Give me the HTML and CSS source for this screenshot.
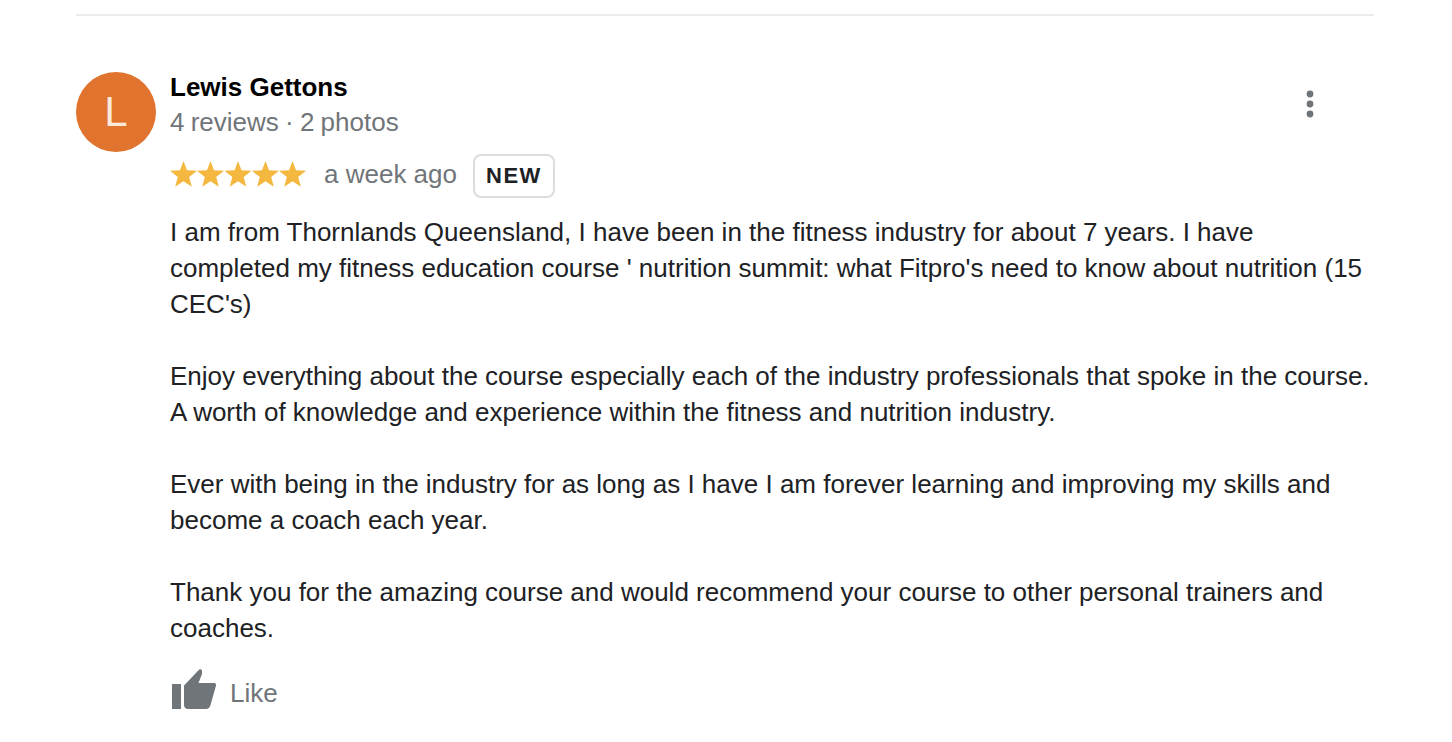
FILE: index.html
```html
<!DOCTYPE html>
<html lang="en">
<head>
<meta charset="utf-8">
<title>Review</title>
<link rel="stylesheet" href="styles.css">
</head>
<body>
<main class="page">
  <article class="review">
    <div class="avatar">L</div>
    <div class="content">
      <div class="head">
        <div>
          <div class="name">Lewis Gettons</div>
          <div class="meta">4 reviews · 2 photos</div>
        </div>
        <svg class="more" viewBox="0 0 10 30" width="10" height="30" aria-label="More"><circle cx="5" cy="5" r="3.4"/><circle cx="5" cy="15" r="3.4"/><circle cx="5" cy="25" r="3.4"/></svg>
      </div>
      <div class="rating">
        <svg class="stars" viewBox="0 0 136 26" width="136" height="26" aria-label="5 stars">
          <path d="M13.500 0l3.500 9.300 10 .5-7.800 6.200 2.600 9.700-8.300-5.500-8.300 5.500 2.600-9.700L0 9.800l10-.5z"/>
          <path transform="translate(27 0)" d="M13.500 0l3.500 9.300 10 .5-7.800 6.200 2.600 9.700-8.300-5.500-8.300 5.500 2.600-9.700L0 9.800l10-.5z"/>
          <path transform="translate(54.500 0)" d="M13.500 0l3.500 9.300 10 .5-7.800 6.200 2.600 9.700-8.300-5.500-8.300 5.500 2.600-9.700L0 9.800l10-.5z"/>
          <path transform="translate(82 0)" d="M13.500 0l3.500 9.300 10 .5-7.800 6.200 2.600 9.700-8.300-5.500-8.300 5.500 2.600-9.700L0 9.800l10-.5z"/>
          <path transform="translate(109 0)" d="M13.500 0l3.500 9.300 10 .5-7.800 6.200 2.600 9.700-8.300-5.500-8.300 5.500 2.600-9.700L0 9.800l10-.5z"/>
        </svg>
        <span class="time">a week ago</span>
        <span class="badge">NEW</span>
      </div>
      <div class="body">
        <p>I am from Thornlands Queensland, I have been in the fitness industry for about 7 years. I have<br>completed my fitness education course ' nutrition summit: what Fitpro's need to know about nutrition (15<br>CEC's)</p>
        <p>Enjoy everything about the course especially each of the industry professionals that spoke in the course.<br>A worth of knowledge and experience within the fitness and nutrition industry.</p>
        <p>Ever with being in the industry for as long as I have I am forever learning and improving my skills and<br>become a coach each year.</p>
        <p>Thank you for the amazing course and would recommend your course to other personal trainers and<br>coaches.</p>
      </div>
      <div class="like">
        <svg viewBox="0 0 46 42" width="46" height="42" aria-hidden="true"><path d="M2 16h9v25H2z"/><path d="M14 17.500L29 1.800c1-1 3-.4 3 1.200v3L28.500 15H44c1.500 0 2.300 1.100 2 2.500L40.500 37c-.7 2.500-2.200 4-4.500 4H18c-2.500 0-4-1.700-4-4z"/></svg>
        <span class="like-label">Like</span>
      </div>
    </div>
  </article>
</main>
</body>
</html>
```

FILE: styles.css
```css
* { box-sizing: border-box; }
html, body { margin: 0; height: 742px; overflow: hidden; background: #fff; }
body { font-family: "Liberation Sans", Arial, sans-serif; color: #202124; }
.page { margin: 14px 78px 0 76px; border-top: 2px solid #ebebeb; }
.review { display: flex; gap: 14px; padding-top: 56px; }
.avatar {
  flex: none; width: 80px; height: 80px; border-radius: 50%;
  background: #e0732d; color: #fbe9dc; font-size: 42px; line-height: 80px; text-align: center;
}
.content { flex: 1; min-width: 0; }
.head { display: flex; justify-content: space-between; align-items: flex-start; }
.name { font-size: 26px; font-weight: 700; line-height: 30px; color: #000; }
.meta { font-size: 26px; line-height: 40px; color: #70757a; word-spacing: -1px; }
.more { fill: #70757a; margin: 17px 59px 0 0; }
.rating { display: flex; align-items: center; height: 44px; margin-top: 10px; }
.stars { fill: #f4b73f; }
.time { font-size: 26px; color: #70757a; margin-left: 18px; }
.badge {
  margin: 4px 0 0 16px; width: 82px; height: 44px; border: 2px solid #dadce0; border-radius: 8px;
  font-size: 22px; font-weight: 700; letter-spacing: 1.5px; line-height: 40px; text-align: center; color: #202124;
}
.body { font-size: 26px; line-height: 36px; margin-top: 18px; color: #202124; }
.body p { margin: 0 0 36px; white-space: nowrap; }
.body p:last-child { margin-bottom: 0; }
.like { display: flex; align-items: flex-start; gap: 14px; margin-top: 22px; color: #70757a; font-size: 26px; }
.like svg { fill: #70757a; }
.like-label { margin-top: 10px; line-height: 30px; }
```
